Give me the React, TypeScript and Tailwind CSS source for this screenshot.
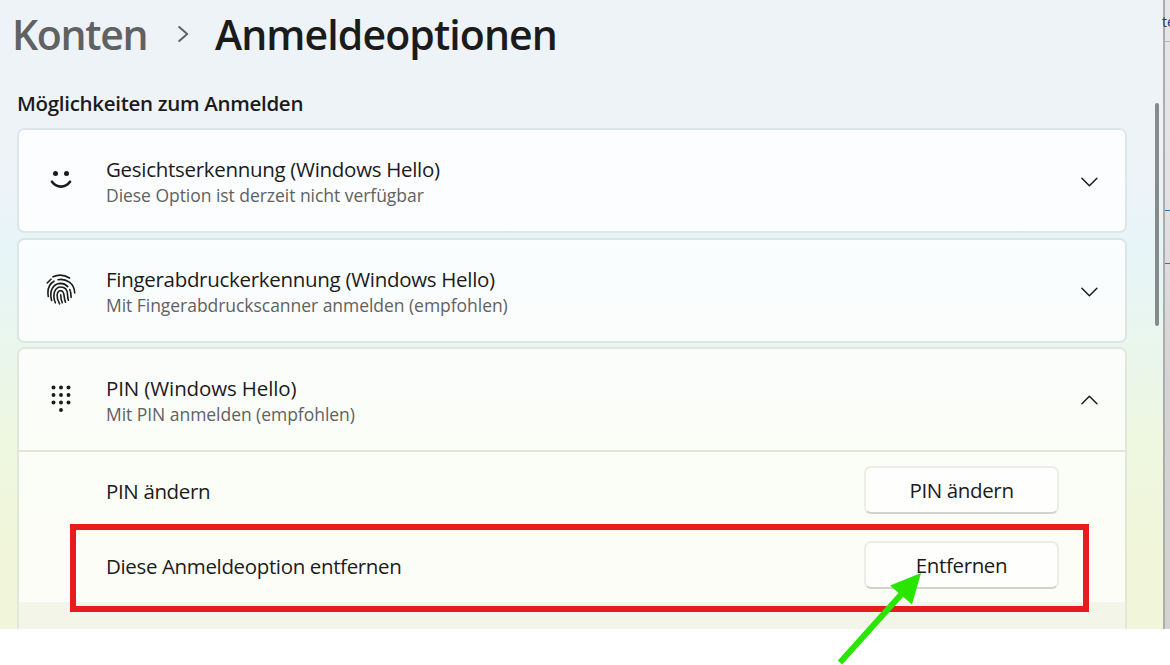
import React from 'react';

type ChevronProps = {
    up?: boolean
}

const Chevron: React.FC<ChevronProps> = ({up}) => (
    <svg width="18" height="12" viewBox="0 0 18 12" fill="none" stroke="#1b1b1b" strokeWidth="1.5"
         strokeLinecap="round" strokeLinejoin="round">
        <path d={up ? "M1.9 9.700 9.400 2.300l7.500 7.400" : "M1.9 2.300 9.400 9.700l7.500-7.400"}/>
    </svg>
)

const FaceIcon = () => (
    <svg width="30" height="30" viewBox="0 0 30 30" fill="none">
        <circle cx="9.5" cy="8.5" r="2.5" fill="#1b1b1b"/>
        <circle cx="20.5" cy="8.5" r="2.5" fill="#1b1b1b"/>
        <path d="M6 16.800C11 23.300 19 23.300 24 16.800" stroke="#1b1b1b" strokeWidth="2.700" strokeLinecap="round"/>
    </svg>
)

const FingerIcon = () => (
    <svg width="30" height="32" viewBox="0 0 30 32" fill="none" stroke="#1b1b1b" strokeWidth="1.6"
         strokeLinecap="round">
        <path d="M7 2.800C11.500.700 18 .500 23.500 4"/>
        <path d="M1.200 9 5 5.200"/>
        <path d="M8 7.200C3.500 9.800 1 15 2.300 22.500"/>
        <path d="M12 5.700C20 4.200 28.600 9.500 28.700 19"/>
        <path d="M5.600 26.500C3 17 7 9.600 14.500 9.400c3 0 5.200 1 7.200 3.200"/>
        <path d="M23.800 15.500c1.200 2.800 1.400 5 1.300 8"/>
        <path d="M9.300 28.800C6 20.500 8.800 13.100 14.700 13c4.800 0 6.700 3.700 6.800 7.500.1 2.300.4 4 .9 5.700"/>
        <path d="M13.600 29.900C9.600 23.500 10.700 16.700 14.700 16.700c3.200 0 3.200 3.600 3.500 6 .2 2.200.7 3.900 1.300 5.500"/>
        <path d="M14.700 20.700c0 3.300.5 5.500 1.600 8"/>
    </svg>
)

const PinIcon = () => (
    <svg width="30" height="30" viewBox="0 0 30 30" fill="#1b1b1b">
        {[3.500, 11, 18.500].map((y) => [7.500, 15, 22.500].map((x) => (
            <circle key={`${x}-${y}`} cx={x} cy={y} r="1.95"/>
        )))}
        <circle cx="15" cy="26" r="1.95"/>
    </svg>
)

type OptionHeaderProps = {
    icon: React.ReactNode
    title: React.ReactNode
    text: React.ReactNode
    open?: boolean
}

const OptionHeader: React.FC<OptionHeaderProps> = ({icon, title, text, open}) => (
    <div className="flex h-[101px] items-center pl-[25px] pr-[27px]">
        <div className="flex w-[34px] justify-center pb-[1px]">{icon}</div>
        <div className="ml-7 flex-1 pt-[3px]">
            <p className={open
                ? "pb-[2px] text-[20.5px] leading-6 tracking-[-0.12px]"
                : "pb-[2px] text-[20.5px] leading-6 tracking-[-0.3px]"}>
                {title}
            </p>
            <p className="text-[17.5px] leading-6 tracking-[-0.04px] text-[#5f6162]">{text}</p>
        </div>
        <div className={open ? "pt-[1px]" : "pt-[2px]"}><Chevron up={open}/></div>
    </div>
)

type ActionRowProps = {
    label: React.ReactNode
    button: React.ReactNode
}

const ActionRow: React.FC<ActionRowProps> = ({label, button}) => (
    <div className="flex h-[75px] items-center justify-between pl-[87px] pr-[66px] text-[20.5px] leading-[26px] tracking-[-0.36px]">
        <p className="pt-[3px]">{label}</p>
        <button className="mt-[1px] h-12 w-[195px] rounded-[7px] border-2 border-[#ecede7] border-b-[#d2d3cd] bg-[#fefefd]">
            {button}
        </button>
    </div>
)

export default function App() {
    return (
        <div className="relative h-[665px] w-[1170px] overflow-hidden bg-white font-['Open_Sans',sans-serif] text-[#1b1b1b]">
            <div className="flex h-[629px]">
                <main className="flex w-[1163px] flex-col overflow-hidden bg-[linear-gradient(180deg,#eef3f8_0%,#eef3f8_27%,#e7f5f7_41%,#eaf6ee_54%,#eef7e0_71%,#f1f6da_88%,#f1f6da_100%)]">
                    <h1 className="flex h-[88px] shrink-0 whitespace-nowrap pl-[12px] pt-[1px] text-[41px] font-semibold leading-[66px] tracking-[-0.9px]">
                        <span className="w-[162px] tracking-[-1.3px] text-[#5f6162]">Konten</span>
                        <svg className="ml-[1px] mt-[22px] w-[40px]" width="40" height="20" viewBox="0 0 40 20" fill="none"
                             stroke="#5f6162" strokeWidth="2" strokeLinecap="round" strokeLinejoin="round">
                            <path d="m4.200 4 8 7-8 7"/>
                        </svg>
                        <span>Anmeldeoptionen</span>
                    </h1>
                    <h2 className="h-10 shrink-0 pl-[17px] text-[20.5px] font-semibold leading-[30px] tracking-[-0.3px]">
                        Möglichkeiten zum Anmelden
                    </h2>
                    <div className="ml-[17px] flex w-[1110px] flex-col">
                        <section className="mb-[5px] h-[105px] rounded-[7px] border-2 border-[#dde7e9] bg-white/80 bg-clip-padding">
                            <OptionHeader
                                icon={<FaceIcon/>}
                                title="Gesichtserkennung (Windows Hello)"
                                text="Diese Option ist derzeit nicht verfügbar"
                            />
                        </section>
                        <section className="mb-[4px] h-[105px] rounded-[7px] border-2 border-[#dbe7e5] bg-white/80 bg-clip-padding">
                            <OptionHeader
                                icon={<FingerIcon/>}
                                title="Fingerabdruckerkennung (Windows Hello)"
                                text="Mit Fingerabdruckscanner anmelden (empfohlen)"
                            />
                        </section>
                        <section className="h-[300px] rounded-t-[7px] border-2 border-b-0 border-[#dfe8d9] bg-white/75 bg-clip-padding">
                            <OptionHeader
                                icon={<PinIcon/>}
                                title="PIN (Windows Hello)"
                                text="Mit PIN anmelden (empfohlen)"
                                open
                            />
                            <div className="border-t-2 border-[#e0e7d7]">
                                <ActionRow label="PIN ändern" button="PIN ändern"/>
                                <ActionRow label="Diese Anmeldeoption entfernen" button="Entfernen"/>
                            </div>
                            <div className="h-8 bg-[#f3f5e8]"/>
                        </section>
                    </div>
                </main>
                <aside className="w-[7px] overflow-hidden border-l-2 border-[#adadad] bg-[linear-gradient(180deg,#e6e6e6,#e2e2e2_30%,#d4d4d4_60%,#d2d2d2)]">
                    <div className="h-[42px] border-b border-[#b5b5b5]"/>
                    <div className="h-[169px] border-b border-[#2878b8]"/>
                    <div className="h-[53px] border-b border-[#2878b8]"/>
                </aside>
            </div>
            <span className="absolute left-[1162px] top-[10px] text-[14px] leading-6 text-[#1d3a78]">te</span>
            <div className="absolute left-[1155px] top-[103px] h-[223px] w-[4px] rounded-full bg-[#868b8b]"/>
            <div className="absolute left-[70px] top-[524px] h-[88px] w-[1019px] border-[6px] border-[#e81c1c]"/>
            <svg className="absolute left-[830px] top-[565px]" width="100" height="100" viewBox="0 0 100 100">
                <path d="M10 97.500 72 28.500" stroke="#28e600" strokeWidth="6"/>
                <path d="M91 8 60 20.500 82 39.500Z" fill="#28e600"/>
            </svg>
        </div>
    );
}
